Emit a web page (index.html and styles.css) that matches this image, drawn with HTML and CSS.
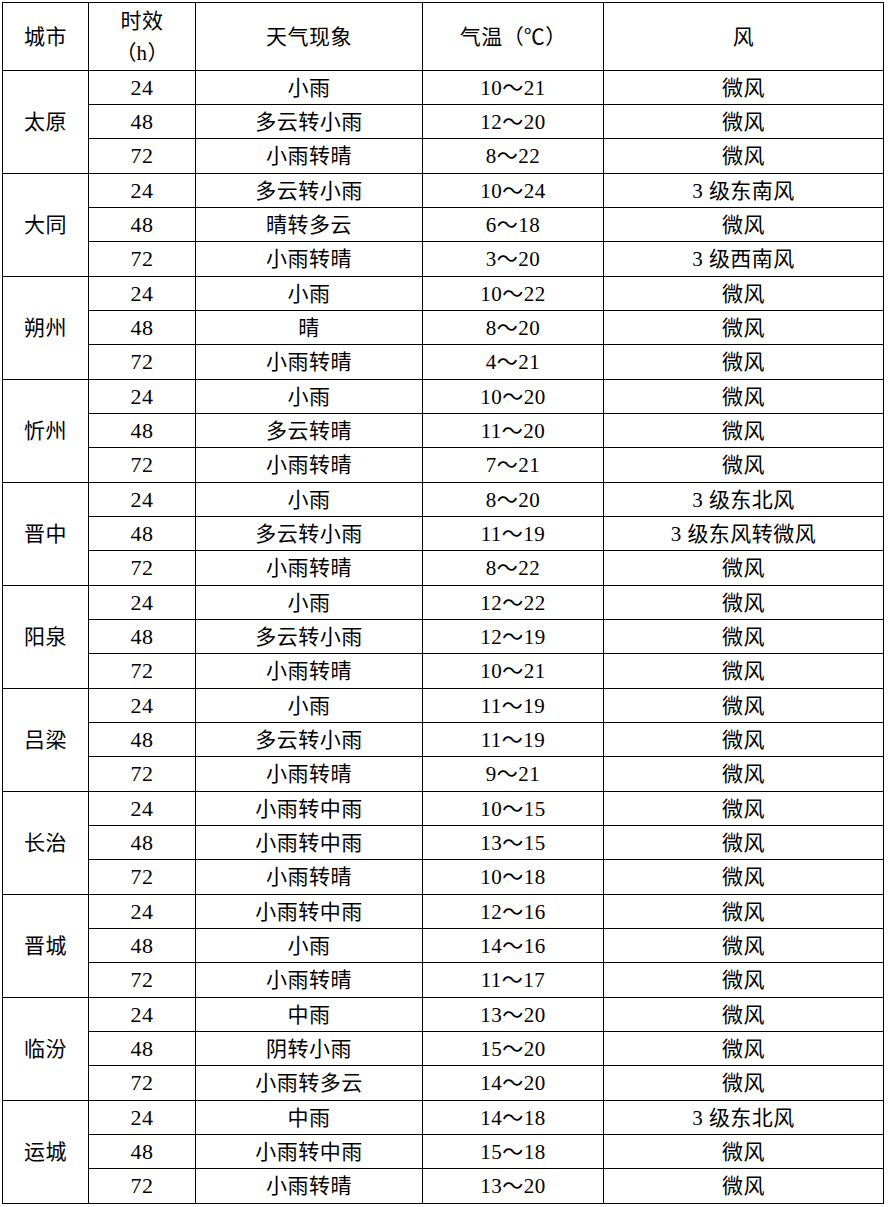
FILE: index.html
```html
<!DOCTYPE html>
<html lang="zh-CN">
<head>
<meta charset="utf-8">
<title>山西天气预报</title>
<link rel="stylesheet" href="styles.css">
</head>
<body>
<table class="fc">
<colgroup>
<col class="c-city"><col class="c-h"><col class="c-wx"><col class="c-t"><col class="c-w">
</colgroup>
<thead>
<tr class="head"><th>城市</th><th class="two">时效<br><span class="fp">（</span>h<span class="fp">）</span></th><th>天气现象</th><th>气温<span class="fp">（</span>℃<span class="fp">）</span></th><th>风</th></tr>
</thead>
<tbody>
<tr class="r1"><td rowspan="3">太原</td><td class="num">24</td><td>小雨</td><td>10～21</td><td>微风</td></tr>
<tr class="r2"><td class="num">48</td><td>多云转小雨</td><td>12～20</td><td>微风</td></tr>
<tr class="r3"><td class="num">72</td><td>小雨转晴</td><td>8～22</td><td>微风</td></tr>

<tr class="r1"><td rowspan="3">大同</td><td class="num">24</td><td>多云转小雨</td><td>10～24</td><td>3 级东南风</td></tr>
<tr class="r2"><td class="num">48</td><td>晴转多云</td><td>6～18</td><td>微风</td></tr>
<tr class="r3"><td class="num">72</td><td>小雨转晴</td><td>3～20</td><td>3 级西南风</td></tr>

<tr class="r1"><td rowspan="3">朔州</td><td class="num">24</td><td>小雨</td><td>10～22</td><td>微风</td></tr>
<tr class="r2"><td class="num">48</td><td>晴</td><td>8～20</td><td>微风</td></tr>
<tr class="r3"><td class="num">72</td><td>小雨转晴</td><td>4～21</td><td>微风</td></tr>

<tr class="r1"><td rowspan="3">忻州</td><td class="num">24</td><td>小雨</td><td>10～20</td><td>微风</td></tr>
<tr class="r2"><td class="num">48</td><td>多云转晴</td><td>11～20</td><td>微风</td></tr>
<tr class="r3"><td class="num">72</td><td>小雨转晴</td><td>7～21</td><td>微风</td></tr>

<tr class="r1"><td rowspan="3">晋中</td><td class="num">24</td><td>小雨</td><td>8～20</td><td>3 级东北风</td></tr>
<tr class="r2"><td class="num">48</td><td>多云转小雨</td><td>11～19</td><td>3 级东风转微风</td></tr>
<tr class="r3"><td class="num">72</td><td>小雨转晴</td><td>8～22</td><td>微风</td></tr>

<tr class="r1"><td rowspan="3">阳泉</td><td class="num">24</td><td>小雨</td><td>12～22</td><td>微风</td></tr>
<tr class="r2"><td class="num">48</td><td>多云转小雨</td><td>12～19</td><td>微风</td></tr>
<tr class="r3"><td class="num">72</td><td>小雨转晴</td><td>10～21</td><td>微风</td></tr>

<tr class="r1"><td rowspan="3">吕梁</td><td class="num">24</td><td>小雨</td><td>11～19</td><td>微风</td></tr>
<tr class="r2"><td class="num">48</td><td>多云转小雨</td><td>11～19</td><td>微风</td></tr>
<tr class="r3"><td class="num">72</td><td>小雨转晴</td><td>9～21</td><td>微风</td></tr>

<tr class="r1"><td rowspan="3">长治</td><td class="num">24</td><td>小雨转中雨</td><td>10～15</td><td>微风</td></tr>
<tr class="r2"><td class="num">48</td><td>小雨转中雨</td><td>13～15</td><td>微风</td></tr>
<tr class="r3"><td class="num">72</td><td>小雨转晴</td><td>10～18</td><td>微风</td></tr>

<tr class="r1"><td rowspan="3">晋城</td><td class="num">24</td><td>小雨转中雨</td><td>12～16</td><td>微风</td></tr>
<tr class="r2"><td class="num">48</td><td>小雨</td><td>14～16</td><td>微风</td></tr>
<tr class="r3"><td class="num">72</td><td>小雨转晴</td><td>11～17</td><td>微风</td></tr>

<tr class="r1"><td rowspan="3">临汾</td><td class="num">24</td><td>中雨</td><td>13～20</td><td>微风</td></tr>
<tr class="r2"><td class="num">48</td><td>阴转小雨</td><td>15～20</td><td>微风</td></tr>
<tr class="r3"><td class="num">72</td><td>小雨转多云</td><td>14～20</td><td>微风</td></tr>

<tr class="r1"><td rowspan="3">运城</td><td class="num">24</td><td>中雨</td><td>14～18</td><td>3 级东北风</td></tr>
<tr class="r2"><td class="num">48</td><td>小雨转中雨</td><td>15～18</td><td>微风</td></tr>
<tr class="r3"><td class="num">72</td><td>小雨转晴</td><td>13～20</td><td>微风</td></tr>
</tbody>
</table>
</body>
</html>
```

FILE: styles.css
```css
html, body {
  margin: 0;
  padding: 0;
  background: #fff;
}
body {
  padding: 2px 0 0 2px;
  font-family: "Liberation Serif", "Noto Sans CJK SC", serif;
  font-size: 21px;
  color: #000;
}
.fc {
  border-collapse: collapse;
  table-layout: fixed;
  width: 881px;
}
.c-city { width: 86px; }
.c-h { width: 107px; }
.c-wx { width: 227px; }
.c-t { width: 181px; }
.c-w { width: 280px; }
.fc th, .fc td {
  border: 1px solid #000;
  padding: 0;
  text-align: center;
  vertical-align: middle;
  font-weight: normal;
  line-height: 24px;
  white-space: nowrap;
  letter-spacing: 0.5px;
}
.fc th.two { line-height: 32px; }
.fp {
  display: inline-block;
  width: 1em;
  text-align: center;
}
.head { height: 68px; }
.r1, .r2 { height: 34px; }
.r3 { height: 35px; }
.num { font-size: 22px; letter-spacing: 0; }
```
